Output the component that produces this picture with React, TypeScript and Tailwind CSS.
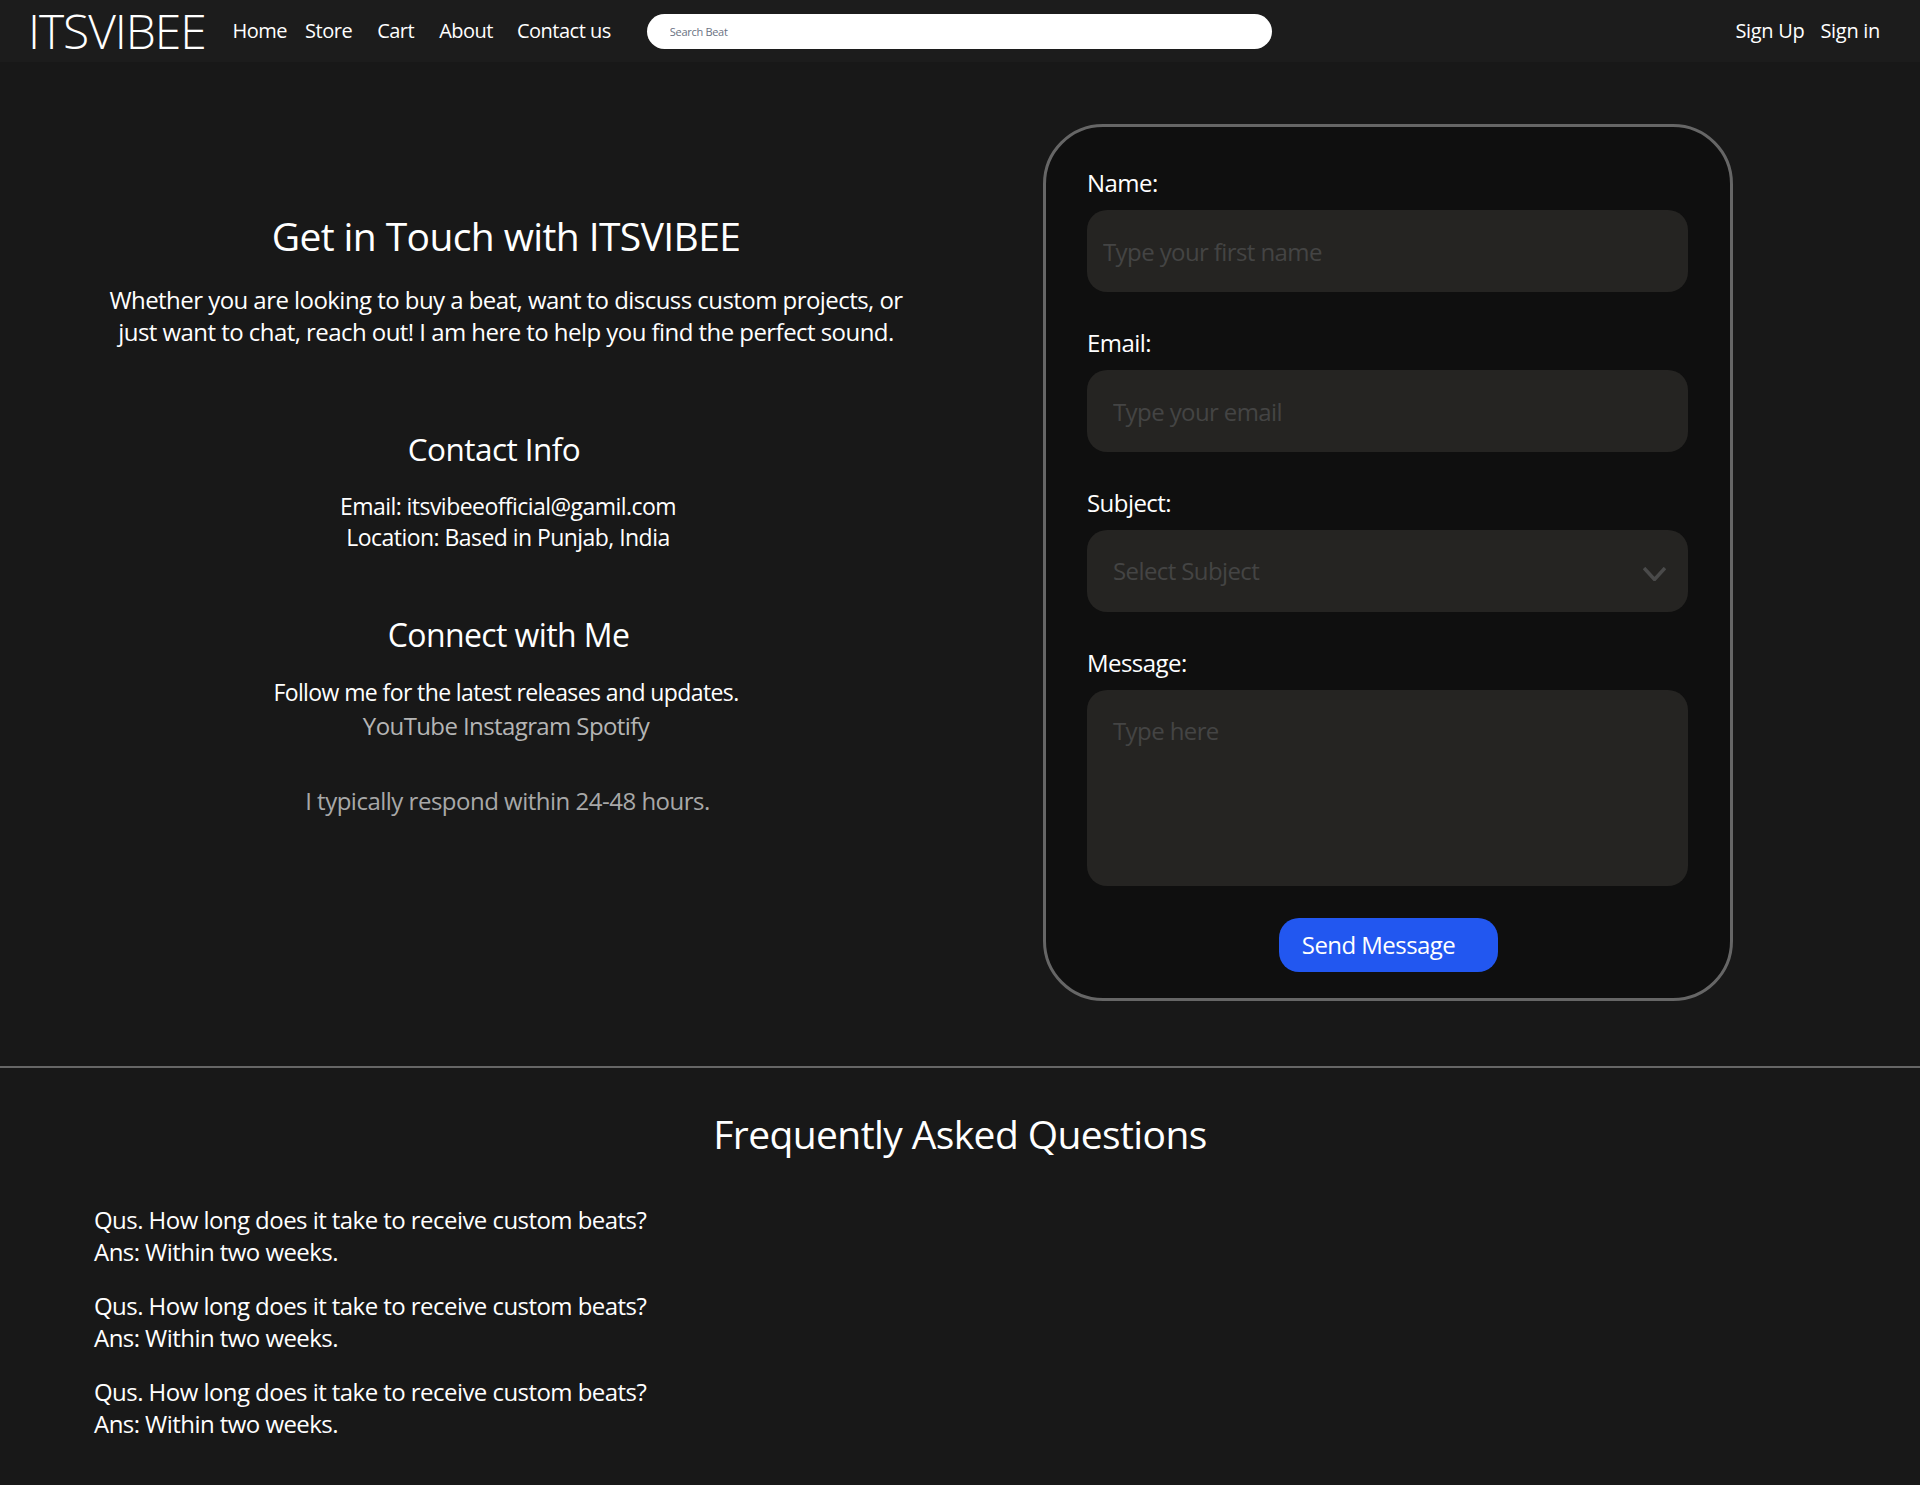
const NAV_LINKS = [
	{ label: "Home", className: "ml-[27px]" },
	{ label: "Store", className: "ml-[18px]" },
	{ label: "Cart", className: "ml-[25px]" },
	{ label: "About", className: "ml-[25px]" },
	{ label: "Contact us", className: "ml-[24px]" },
];

const FAQS = [1, 2, 3];

const fieldClass =
	"mt-[11px] block h-[82px] w-[601px] rounded-[20px] bg-[#252422] text-[24px] tracking-[-0.6px] text-[#444] outline-none placeholder:text-[#444]";

const App = () => {
	return (
		<div className="min-h-[1485px] bg-[#181818] font-['Open_Sans',sans-serif] tracking-[-0.55px] text-white">
			<header className="flex h-[62px] items-center bg-[#1c1c1c] pl-[28px] pr-[40px]">
				<a className="text-[48px] leading-none font-[350] tracking-[-1.1px]">ITSVIBEE</a>
				<nav className="flex text-[20px] tracking-[-0.5px]">
					{NAV_LINKS.map((link) => (
						<a key={link.label} className={link.className}>
							{link.label}
						</a>
					))}
				</nav>
				<input
					placeholder="Search Beat"
					className="ml-[36px] h-[35px] w-[625px] rounded-[18px] bg-white pl-[23px] text-[11px] tracking-[-0.3px] text-gray-500 outline-none placeholder:text-gray-500"
				/>
				<div className="ml-auto flex gap-[16px] text-[20px] tracking-[-0.3px]">
					<a>Sign Up</a>
					<a>Sign in</a>
				</div>
			</header>

			<main className="flex items-start pt-[62px]">
				<section className="w-[1012px] pt-[89px] text-center text-[24px]">
					<h1 className="text-[39px] leading-[46px] tracking-[-0.6px]">Get in Touch with ITSVIBEE</h1>
					<p className="mt-[25px] leading-[32px]">
						Whether you are looking to buy a beat, want to discuss custom projects, or
						<br />
						just want to chat, reach out! I am here to help you find the perfect sound.
					</p>
					<h2 className="mt-[81px] pr-[24px] text-[31.5px] leading-[40px]">Contact Info</h2>
					<p className="mt-[22px] pl-[4px] text-[23px] leading-[31px]">
						Email: itsvibeeofficial@gamil.com
						<br />
						Location: Based in Punjab, India
					</p>
					<h2 className="mt-[62px] pl-[5px] text-[32px] leading-[40px] tracking-[-0.6px]">Connect with Me</h2>
					<p className="mt-[20px] text-[23px] leading-[34px] tracking-[-0.6px]">
						Follow me for the latest releases and updates.
					</p>
					<p className="leading-[34px] tracking-[-0.6px] text-[#b5b5b5]">YouTube Instagram Spotify</p>
					<p className="mt-[41px] pl-[3px] leading-[34px] tracking-[-0.5px] text-[#a8a8a8]">
						I typically respond within 24-48 hours.
					</p>
				</section>

				<form className="ml-[31px] h-[877px] w-[690px] rounded-[60px] border-[3px] border-[#666] bg-[#0f0f0f] px-[41px] pt-[40px]">
					<label className="block text-[24px] leading-[32px]">
						Name:
						<input placeholder="Type your first name" className={`${fieldClass} pl-[16px]`} />
					</label>
					<label className="mt-[35px] block text-[24px] leading-[32px]">
						Email:
						<input placeholder="Type your email" className={`${fieldClass} pl-[26px]`} />
					</label>
					<label className="mt-[35px] block text-[24px] leading-[32px]">
						Subject:
						<div className="relative">
							<div className={`${fieldClass} flex items-center pl-[26px]`}>Select Subject</div>
							<svg
								viewBox="0 0 23 14"
								className="absolute top-[37px] right-[23px] h-[14px] w-[23px] fill-none stroke-[#4a4a4a] stroke-[3.5px]"
							>
								<path d="M1 1L11.5 12.5L22 1" />
							</svg>
						</div>
					</label>
					<label className="mt-[35px] block text-[24px] leading-[32px]">
						Message:
						<textarea
							placeholder="Type here"
							className="mt-[11px] block h-[196px] w-[601px] resize-none rounded-[20px] bg-[#252422] pt-[25px] pl-[26px] text-[24px] tracking-[-0.6px] outline-none placeholder:text-[#444]"
						/>
					</label>
					<div className="mt-[32px] flex justify-center">
						<button type="button" className="h-[54px] w-[219px] rounded-[20px] bg-[#2257f0] pr-[19px] text-[24px]">
							Send Message
						</button>
					</div>
				</form>
			</main>

			<hr className="mt-[65px] border-t-2 border-[#666]" />

			<section className="pt-[41px]">
				<h2 className="text-center text-[39px] leading-[50px] tracking-[-0.6px]">Frequently Asked Questions</h2>
				<div className="mt-[45px] flex flex-col gap-[22px] pl-[94px] text-[24px] leading-[32px]">
					{FAQS.map((id) => (
						<div key={id}>
							<p>Qus. How long does it take to receive custom beats?</p>
							<p>Ans: Within two weeks.</p>
						</div>
					))}
				</div>
			</section>
		</div>
	);
};

export default App;
